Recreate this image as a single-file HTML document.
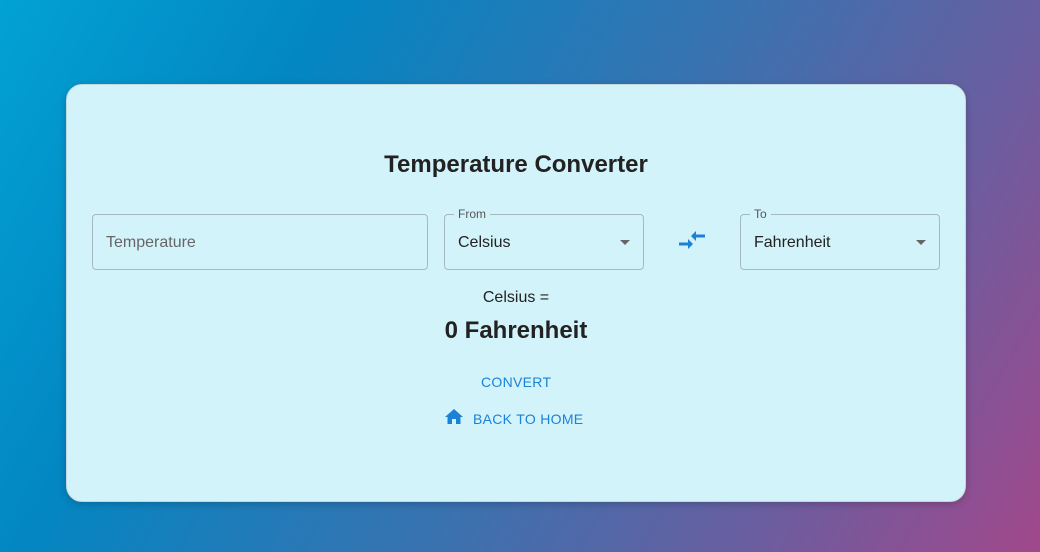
<!DOCTYPE html>
<html><head><style>
html,body{margin:0;width:1040px;height:552px;overflow:hidden;font-family:"Liberation Sans",Arial,sans-serif}
body{background:linear-gradient(120deg,#02a2d4 0%,#0386c2 25%,#3a72b0 55%,#6a5ea0 78%,#a1488b 100%);position:relative}
.card{position:absolute;left:66px;top:84px;width:898px;height:416px;background:#d3f3fa;border:1px solid #c4d6de;border-radius:16px;box-shadow:0 2px 8px rgba(0,0,0,.2)}
h1{position:absolute;left:66px;width:900px;top:151px;margin:0;text-align:center;font-size:24px;font-weight:bold;color:#222}
.f{position:absolute;top:214px;height:56px;border:1px solid #a6b8c0;border-radius:4px;box-sizing:border-box}
.f span.v{position:absolute;left:13px;top:19px;font-size:16px;color:#222}
.f .lab{position:absolute;left:9px;top:-8px;background:#d3f3fa;padding:0 4px;font-size:12px;color:#555}
.arr{position:absolute;right:13px;top:25px;width:0;height:0;border-left:5px solid transparent;border-right:5px solid transparent;border-top:5px solid #666}
.t{position:absolute;left:66px;width:900px;text-align:center;color:#222}
.btn{position:absolute;color:#1b82d6;font-size:14px;letter-spacing:.3px}
</style></head><body>
<div class="card"></div>
<h1>Temperature Converter</h1>
<div class="f" style="left:92px;width:336px"><span class="v" style="color:#666">Temperature</span></div>
<div class="f" style="left:444px;width:200px"><span class="lab">From</span><span class="v">Celsius</span><div class="arr"></div></div>
<svg style="position:absolute;left:678px;top:231px" width="28" height="20" viewBox="0 0 28 20"><path d="M1 11.5h9v-3.5l5 5-5 5v-3.5H1z M27 6.5h-9v3.5l-5-5 5-5v3.5h9z" fill="#1b82d6"/></svg>
<div class="f" style="left:740px;width:200px"><span class="lab">To</span><span class="v">Fahrenheit</span><div class="arr"></div></div>
<div class="t" style="top:289px;font-size:16px">Celsius =</div>
<div class="t" style="top:317px;font-size:24px;font-weight:bold">0 Fahrenheit</div>
<div class="btn" style="left:481px;top:374px">CONVERT</div>
<svg style="position:absolute;left:445px;top:409px" width="18" height="16" viewBox="0 0 18 16"><path d="M7 15v-5h4v5h4.5V8H18L9 0 0 8h2.5v7z" fill="#1b82d6"/></svg>
<div class="btn" style="left:473px;top:411px">BACK TO HOME</div>
</body></html>
